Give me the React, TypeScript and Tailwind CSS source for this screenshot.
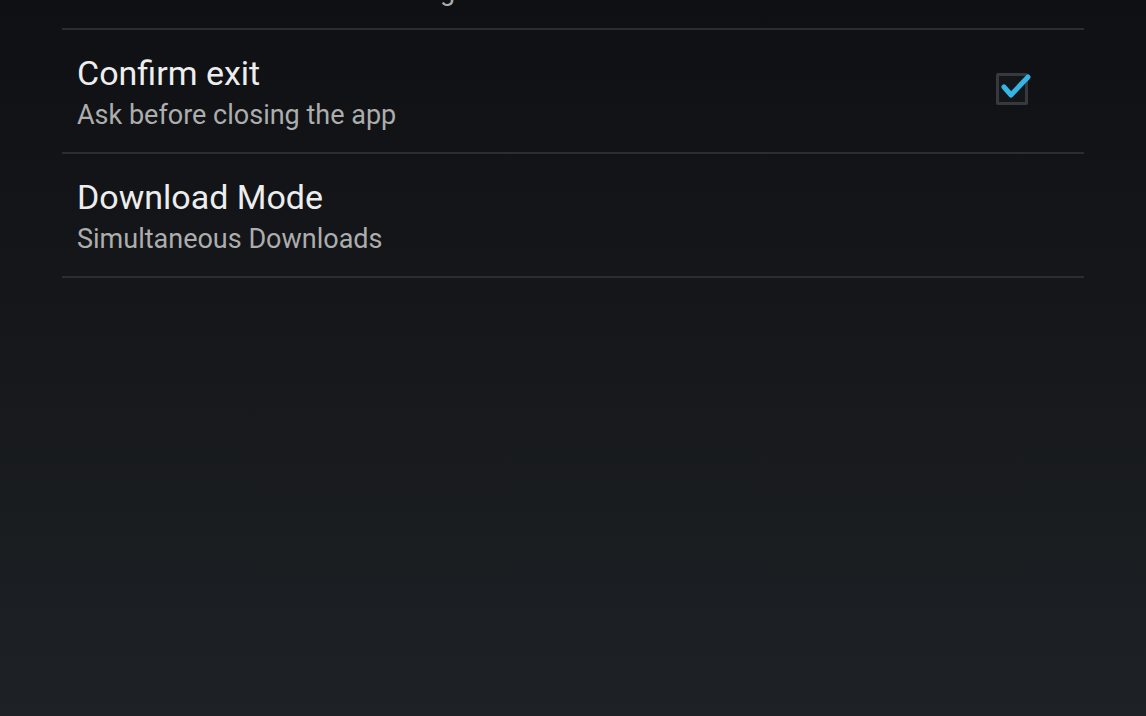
const rows = [
  { title: "Keep screen on", subtitle: "Prevent the screen from turning off", checked: false },
  { title: "Confirm exit", subtitle: "Ask before closing the app", checked: true },
  { title: "Download Mode", subtitle: "Simultaneous Downloads", checked: null },
];

const Check = () => (
  <div className="relative h-[32px] w-[32px] rounded-[2px] border-[3px] border-[#363a3f] bg-[#14171a]">
    <svg
      className="absolute -left-[3px] -top-[3px] overflow-visible"
      width="32"
      height="32"
      viewBox="0 0 32 32"
      fill="none"
    >
      <path
        d="M8 14 L15 22 L32 4"
        stroke="#35b4e6"
        strokeWidth="5"
        strokeLinecap="round"
        strokeLinejoin="round"
      />
    </svg>
  </div>
);

export default function App() {
  return (
    <div
      className="h-[716px] w-[1146px] overflow-hidden bg-gradient-to-b from-[#0e1013] to-[#1e2125]"
      style={{ fontFamily: "Roboto, 'Noto Sans', sans-serif" }}
    >
      <div className="mx-[62px] -mt-[94px]">
        {rows.map((row) => (
          <div key={row.title} className="border-b-2 border-[#2a2d31]">
            <div className="flex h-[122px] items-start justify-between pl-[15px] pr-[56px] pt-[23px]">
              <div className="flex flex-col">
                <span className="text-[34px] leading-[40px] text-[#ededed]">{row.title}</span>
                <span className="mt-[6px] text-[27px] leading-[32px] text-[#adadad]">
                  {row.subtitle}
                </span>
              </div>
              {row.checked && (
                <div className="mt-[20px]">
                  <Check />
                </div>
              )}
            </div>
          </div>
        ))}
      </div>
    </div>
  );
}
